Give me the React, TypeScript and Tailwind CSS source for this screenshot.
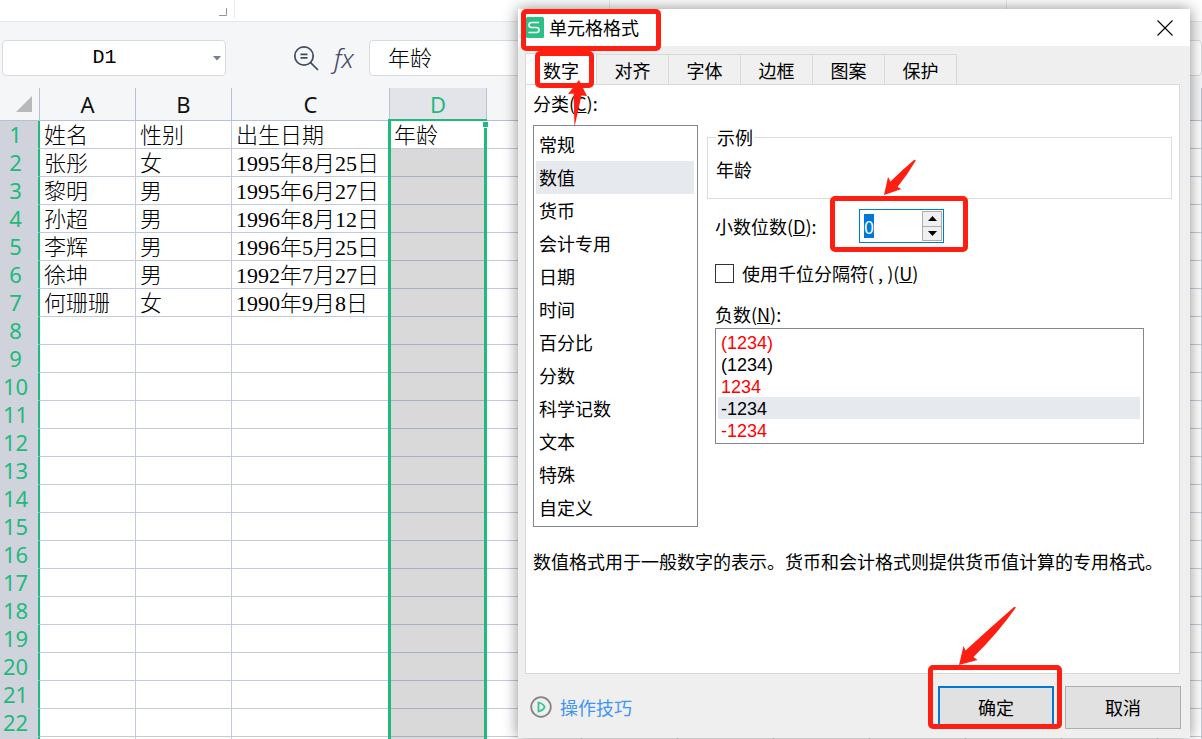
import { useEffect, useRef, useState } from 'react';

const columns = ['A', 'B', 'C', 'D', '', '', '', '', '', '', '', ''];

const rows: string[][] = [
  ['姓名', '性别', '出生日期', '年龄'],
  ['张彤', '女', '1995年8月25日'],
  ['黎明', '男', '1995年6月27日'],
  ['孙超', '男', '1996年8月12日'],
  ['李辉', '男', '1996年5月25日'],
  ['徐坤', '男', '1992年7月27日'],
  ['何珊珊', '女', '1990年9月8日'],
];

const ROW_COUNT = 22;

const tabs = ['数字', '对齐', '字体', '边框', '图案', '保护'];

const categories = [
  '常规', '数值', '货币', '会计专用', '日期', '时间',
  '百分比', '分数', '科学记数', '文本', '特殊', '自定义',
];

const negatives = [
  { text: '(1234)', red: true },
  { text: '(1234)', red: false },
  { text: '1234', red: true },
  { text: '-1234', red: false },
  { text: '-1234', red: true },
];

const Ribbon = () => (
  <div className="relative h-[22px] border-b border-[#e4e6ea] bg-white">
    <svg className="absolute left-[219px] top-[8px]" width="9" height="9" viewBox="0 0 9 9">
      <path d="M0 7.5H7.5V0" fill="none" stroke="#8e96ab" />
    </svg>
    <span className="absolute left-[234px] top-0 h-[18px] w-px bg-[#e8eaee]" />
    <span className="absolute left-[609px] top-0 h-[18px] w-px bg-[#e8eaee]" />
    <span className="absolute left-[1006px] top-0 h-[18px] w-px bg-[#e8eaee]" />
  </div>
);

const FormulaBar = () => (
  <div className="flex h-[66px] items-center pl-[2px] pt-[6px]">
    <div className="flex h-9 w-56 items-center rounded border border-[#d8dae0] bg-white">
      <input
        aria-label="名称框"
        defaultValue="D1"
        className="w-[203px] bg-transparent text-center font-['Liberation_Mono',monospace] text-[20px] text-black outline-none"
      />
      <button aria-label="展开名称" className="ml-auto pr-1">
        <svg width="8" height="5" viewBox="0 0 8 5">
          <path d="M0 0H8L4 4.5Z" fill="#737f98" />
        </svg>
      </button>
    </div>
    <button aria-label="查找" className="ml-[67px]">
      <svg width="26" height="26" viewBox="0 0 26 26" fill="none" stroke="#3f4a63" strokeWidth="1.7">
        <circle cx="11" cy="11" r="9.2" />
        <path d="M7.5 9.3H14.5M7.5 12.8H14.5M17.6 17.6L25 25" />
      </svg>
    </button>
    <button
      aria-label="插入函数"
      className="ml-[15px] w-8 text-left font-['Noto_Sans',sans-serif] text-[26px] font-light italic leading-8 text-[#3f4a63]"
    >
      fx
    </button>
    <input
      aria-label="编辑栏"
      defaultValue="年龄"
      className="ml-[3px] h-9 min-w-0 flex-1 rounded border border-[#d8dae0] bg-white pb-1 pl-[18px] text-[22px] font-light text-black outline-none"
    />
  </div>
);

const colWidths = [
  'w-[96px]', 'w-[96px]', 'w-[158px]', 'w-[97px]', 'w-[95px]', 'w-[96px]',
  'w-[96px]', 'w-[96px]', 'w-[96px]', 'w-[96px]', 'w-[96px]', '',
];

const Sheet = () => (
  <div className="relative">
    <table className="w-full table-fixed border-separate border-spacing-0">
      <colgroup>
        <col className="w-[40px]" />
        {columns.map((_, i) => (
          <col key={i} className={colWidths[i]} />
        ))}
      </colgroup>
      <thead>
        <tr className="h-[33px]">
          <th className="border-b border-r border-[#b9c0d3] p-0">
            <svg className="ml-4" width="16" height="16" viewBox="0 0 16 16">
              <path d="M16 0V16H0Z" fill="#b9b9b9" />
            </svg>
          </th>
          {columns.map((c, i) => (
            <th
              key={i}
              className={`border-b border-r border-[#b9c0d3] p-0 font-['Noto_Sans',sans-serif] text-[22px] font-normal leading-[30px] ${
                c === 'D' ? 'bg-[#e3e4ea] text-[#21ba7c]' : 'text-[#111]'
              }`}
            >
              {c}
            </th>
          ))}
        </tr>
      </thead>
      <tbody className="bg-white">
        {/* one extra unnumbered row runs off the bottom edge */}
        {Array.from({ length: ROW_COUNT + 1 }, (_, r) => (
          <tr key={r} className="h-[28px]">
            <th className="border-b border-r-2 border-b-[#cbd5e2] border-r-[#21ba7c] bg-[#d0d3db] p-0 pr-[7px] text-center font-['Noto_Sans',sans-serif] text-[22px] font-normal leading-[27px] text-[#21ba7c]">
              {r < ROW_COUNT ? r + 1 : null}
            </th>
            {columns.map((c, i) => (
              <td
                key={i}
                className={`overflow-hidden whitespace-nowrap border-b border-r border-[#c3cadc] p-0 pl-1 pt-[3px] font-['Liberation_Serif','Noto_Sans_CJK_SC',serif] text-[22px] font-light leading-6 ${
                  c === 'D' && r > 0 ? 'border-b-[#a5afc2] bg-[#d9d9d9]' : ''
                }`}
              >
                {rows[r]?.[i]}
              </td>
            ))}
          </tr>
        ))}
      </tbody>
    </table>
    {/* selected column frame and its fill handle */}
    <div className="absolute bottom-0 left-[388px] top-[31px] w-[99px] border-x-3 border-t-2 border-[#21ba7c]" />
    <div className="absolute left-[482px] top-[33px] size-[7px] border border-white bg-[#21ba7c]" />
  </div>
);

const Spinner = () => {
  const [value, setValue] = useState<number>(0);
  const ref = useRef<HTMLInputElement>(null);

  useEffect(() => {
    ref.current?.focus();
    ref.current?.select();
  }, []);

  return (
    <div className="flex h-[34px] w-[85px] items-center border border-[#0078d7] bg-white p-px">
      <input
        id="decimals"
        ref={ref}
        value={value}
        onChange={(e) => setValue(Number(e.target.value) || 0)}
        className="w-0 min-w-0 flex-1 pl-[3px] text-[18px] leading-6 outline-none selection:bg-[#0078d7] selection:text-white"
      />
      <div className="flex h-full w-5 flex-col">
        <button
          aria-label="增加"
          onClick={() => setValue(value + 1)}
          className="flex flex-1 items-center justify-center border border-[#adadad] bg-[#f0f0f0]"
        >
          <svg width="9" height="5" viewBox="0 0 9 5"><path d="M0 5L4.5 0L9 5Z" /></svg>
        </button>
        <button
          aria-label="减少"
          onClick={() => setValue(Math.max(0, value - 1))}
          className="flex flex-1 items-center justify-center border border-t-0 border-[#adadad] bg-[#f0f0f0]"
        >
          <svg width="9" height="5" viewBox="0 0 9 5"><path d="M0 0L4.5 5L9 0Z" /></svg>
        </button>
      </div>
    </div>
  );
};

const NumberPanel = () => {
  const [category, setCategory] = useState<number>(1);
  const [negative, setNegative] = useState<number>(3);

  return (
    <div className="flex-1 border border-[#d9d9d9] bg-white px-[7px] pt-[7px]">
      <div className="flex">
        <div className="w-[165px]">
          <div id="category-label" className="h-[33px] leading-[22px]">分类(<u>C</u>):</div>
          <ul role="listbox" aria-labelledby="category-label" className="border border-[#828790] p-[2px] pr-[3px]">
            {categories.map((name, i) => (
              <li
                key={name}
                role="option"
                aria-selected={i === category}
                onClick={() => setCategory(i)}
                className={`h-[33px] pl-[3px] leading-8 ${i === category ? 'bg-[#e6e9ee]' : ''}`}
              >
                {name}
              </li>
            ))}
          </ul>
        </div>

        <div className="ml-[9px] flex-1 pt-[33px]">
          <fieldset className="h-[74px] border border-[#dcdcdc] px-2">
            <legend className="-mt-px px-px leading-6">示例</legend>
            <div className="pt-[9px] leading-[22px]">年龄</div>
          </fieldset>
          <div className="mt-[10px] flex h-[34px] items-center pl-2">
            <label htmlFor="decimals" className="w-36">小数位数(<u>D</u>):</label>
            <Spinner />
          </div>
          <label className="mt-[18px] flex h-6 items-center gap-2 pl-2">
            <input type="checkbox" className="size-[19px] appearance-none border border-[#333] bg-white checked:bg-[#0078d7]" />
            <span className="leading-[22px]">使用千位分隔符( , )(<u>U</u>)</span>
          </label>
          <div id="negative-label" className="mt-[17px] h-[26px] pl-2 leading-6">负数(<u>N</u>):</div>
          <ul
            role="listbox"
            aria-labelledby="negative-label"
            className="ml-2 mr-7 border border-[#828790] p-[2px] pr-[3px] font-['Liberation_Sans',sans-serif]"
          >
            {negatives.map((n, i) => (
              <li
                key={i}
                role="option"
                aria-selected={i === negative}
                onClick={() => setNegative(i)}
                className={`h-[22px] pl-[3px] leading-6 ${n.red ? 'text-[#ff0000]' : ''} ${
                  i === negative ? 'bg-[#e6e9ee]' : ''
                }`}
              >
                {n.text}
              </li>
            ))}
          </ul>
        </div>
      </div>
      <p className="mt-[23px] whitespace-nowrap leading-[22px]">
        数值格式用于一般数字的表示。货币和会计格式则提供货币值计算的专用格式。
      </p>
    </div>
  );
};

// Red marker boxes and arrows drawn on top of the dialog
const Annotations = () => (
  <svg
    className="pointer-events-none absolute left-0 top-0"
    width="672"
    height="730"
    viewBox="518 9 672 730"
    fill="none"
    stroke="#ff1f12"
    strokeWidth="5"
  >
    <rect x="523.5" y="11.5" width="135" height="37" rx="2.5" />
    <rect x="537.5" y="53.5" width="54" height="32" rx="2.5" />
    <rect x="832.5" y="198.5" width="133" height="51" rx="2.5" />
    <rect x="930.5" y="667.5" width="129" height="59" rx="2.5" />
    <g fill="#ff1f12" stroke="none">
      <path d="M579 80L587 96L581.5 95.5L574.5 127L573.5 93.5L568 94Z" />
      <path d="M884 195L888 177L890.5 181.5Q902 170 914 160Q916 159 915.5 161Q908 174 897.5 187L901.5 189Z" />
      <path d="M959 665L963.5 646L965.5 650.5Q990 628 1014 607Q1016 606 1015.5 608Q998 633 973.5 657L977.5 660Z" />
    </g>
  </svg>
);

const FormatDialog = () => {
  const [tab, setTab] = useState<number>(0);

  return (
    <div
      role="dialog"
      aria-label="单元格格式"
      className="absolute bottom-px right-3 top-[9px] flex w-[672px] flex-col bg-[#efefef] text-[18px] text-black shadow-[0_0_14px_rgba(0,0,0,0.45)]"
    >
      <div className="flex h-[37px] items-center bg-white pl-2">
        <svg width="19" height="22" viewBox="0 0 19 22">
          <rect width="18" height="21" rx="1.5" fill="#2cc086" />
          <path
            d="M13 5.5H5.5Q3 5.5 3 8T5.5 10.5H10.5Q13 10.5 13 13T10.5 15.500H2.500"
            fill="none"
            stroke="#fff"
            strokeWidth="1.6"
          />
        </svg>
        <h1 className="ml-1 pb-px">单元格格式</h1>
        <button aria-label="关闭" className="ml-auto mr-[17px]">
          <svg width="16" height="16" viewBox="0 0 16 16">
            <path d="M0.500 0.500L15.500 15.500M15.500 0.500L0.500 15.500" stroke="#000" strokeWidth="1.1" />
          </svg>
        </button>
      </div>

      <div className="flex flex-1 flex-col pl-[7px] pr-[10px] pt-[7px]">
        <div role="tablist" className="flex h-[31px]">
          {tabs.map((name, i) => (
            <button
              key={name}
              role="tab"
              aria-selected={i === tab}
              onClick={() => setTab(i)}
              className={`w-[72px] border-r border-t border-[#d9d9d9] leading-6 ${
                i === tab ? '-mb-px h-8 border-l bg-white' : 'mt-px bg-[#f0f0f0]'
              }`}
            >
              {name}
            </button>
          ))}
        </div>
        <NumberPanel />
      </div>

      <div className="flex h-16 items-start pl-3 pr-[9px] pt-3">
        <a href="#tips" className="flex h-[42px] items-center gap-2 text-[#4093f7]">
          <svg width="22" height="22" viewBox="0 0 22 22" fill="none">
            <circle cx="11" cy="11" r="9.8" stroke="#858585" strokeWidth="1.8" />
            <path d="M8.500 6.500V15.500Q14 14 14.500 11Q14 8 8.500 6.500Z" stroke="#35c48b" strokeWidth="1.8" />
          </svg>
          操作技巧
        </a>
        <button className="ml-auto h-[43px] w-[116px] border-2 border-[#0078d7] bg-[#e1e1e1]">确定</button>
        <button className="ml-[11px] h-[43px] w-[116px] border border-[#adadad] bg-[#e1e1e1]">取消</button>
      </div>

      <Annotations />
    </div>
  );
};

const App = () => (
  <div className="relative h-screen overflow-hidden bg-[#f5f6f8] font-['Noto_Sans_CJK_SC',sans-serif]">
    <Ribbon />
    <FormulaBar />
    <Sheet />
    <FormatDialog />
  </div>
);

export default App;
